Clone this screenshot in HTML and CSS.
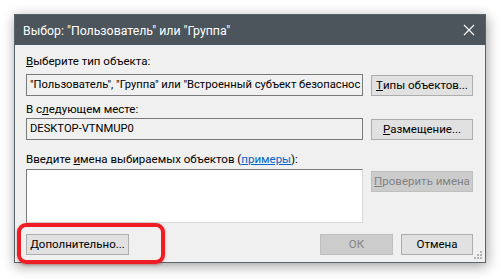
FILE: index.html
```html
<!DOCTYPE html>
<html lang="ru">
<head>
<meta charset="utf-8">
<title>Выбор</title>
<link rel="stylesheet" href="styles.css">
</head>
<body>
<div class="page">
  <div class="window">
    <div class="titlebar">
      <span class="title">Выбор: "Пользователь" или "Группа"</span>
      <svg class="close" width="12" height="12" viewBox="0 0 12 12"><path d="M1 1 L11 11 M11 1 L1 11" stroke="#fff" stroke-width="1.1" fill="none"/></svg>
    </div>
    <div class="content">
      <div class="label l1"><u>В</u>ыберите тип объекта:</div>
      <div class="row">
        <div class="field">"Пользователь", "Группа" или "Встроенный субъект безопаснос</div>
        <div class="btn"><u>Т</u>ипы объектов...</div>
      </div>
      <div class="label l2">В с<u>л</u>едующем месте:</div>
      <div class="row">
        <div class="field">DESKTOP-VTNMUP0</div>
        <div class="btn"><u>Р</u>азмещение...</div>
      </div>
      <div class="label l3">Введите <u>и</u>мена выбираемых объектов (<span class="link">примеры</span>):</div>
      <div class="row top">
        <div class="area"></div>
        <div class="btn disabled btn-check"><u>П</u>роверить имена</div>
      </div>
      <div class="bottom">
        <div class="btn btn-more"><u>Д</u>ополнительно...</div>
        <div class="spacer"></div>
        <div class="btn disabled btn-ok">ОК</div>
        <div class="btn btn-cancel">Отмена</div>
      </div>
    </div>
    <svg class="grip" width="8" height="8" viewBox="0 0 8 8">
      <rect x="6" y="0" width="2" height="2" fill="#b4b4b4"/>
      <rect x="3" y="3" width="2" height="2" fill="#b4b4b4"/>
      <rect x="6" y="3" width="2" height="2" fill="#b4b4b4"/>
      <rect x="0" y="6" width="2" height="2" fill="#b4b4b4"/>
      <rect x="3" y="6" width="2" height="2" fill="#b4b4b4"/>
      <rect x="6" y="6" width="2" height="2" fill="#b4b4b4"/>
    </svg>
  </div>
  <div class="highlight"></div>
</div>
</body>
</html>
```

FILE: styles.css
```css
html, body {
  margin: 0;
  padding: 0;
  background: #ffffff;
}
body {
  font-family: Roboto, "Noto Sans", sans-serif;
  font-size: 11.5px;
  color: #000;
}
.page {
  position: relative;
  width: 501px;
  height: 279px;
  padding: 14px 0 0 14px;
  box-sizing: border-box;
}
.window {
  position: relative;
  width: 472px;
  height: 249px;
  box-sizing: border-box;
  border: 1px solid #5c6469;
  background: #f0f0f0;
  box-shadow: 1px 3px 12px rgba(0,0,0,0.38);
  display: flex;
  flex-direction: column;
}
.titlebar {
  height: 30px;
  background: #4c555b;
  display: flex;
  align-items: center;
  padding: 0 10px 0 8px;
  flex: none;
}
.title {
  color: #fff;
  font-size: 12.3px;
  flex: 1;
  padding-top: 1px;
}
.content {
  padding: 0 12px 0 11px;
  display: flex;
  flex-direction: column;
}
.label {
  line-height: 15px;
  height: 15px;
  white-space: nowrap;
}
.l1 { margin-top: 9px; margin-bottom: 5px; }
.l2 { margin-top: 6px; margin-bottom: 1px; }
.l3 { margin-top: 12px; margin-bottom: 2px; }
.row {
  display: flex;
  align-items: center;
  justify-content: space-between;
}
.row.top { align-items: flex-start; }
.field {
  width: 337px;
  height: 22px;
  box-sizing: border-box;
  border: 1px solid #7a7a7a;
  background: #f0f0f0;
  line-height: 20px;
  padding: 0 3px;
  white-space: nowrap;
  overflow: hidden;
  font-size: 11.2px;
}
.area {
  width: 337px;
  height: 54px;
  box-sizing: border-box;
  border: 1px solid #7a7a7a;
  border-right-color: #d8d8d8;
  border-bottom-color: #d8d8d8;
  background: #fff;
}
.btn {
  width: 102px;
  height: 21px;
  box-sizing: border-box;
  border: 1px solid #adadad;
  background: #e1e1e1;
  display: flex;
  align-items: center;
  justify-content: center;
  white-space: nowrap;
  line-height: 19px;
}
.btn.disabled {
  background: #cccccc;
  border-color: #bfbfbf;
  color: #838383;
}
.btn-check { margin-top: 2px; }
.bottom {
  display: flex;
  margin-top: 11px;
  align-items: center;
}
.spacer { flex: 1; }
.btn-more { width: 103px; }
.btn-ok { width: 73px; margin-right: 8px; color: #a0a0a0; }
.btn-cancel { width: 72px; }
.link {
  color: #0066cc;
  text-decoration: underline;
}
.grip {
  position: absolute;
  right: 3px;
  bottom: 3px;
}
.highlight {
  position: absolute;
  left: 17px;
  top: 223px;
  width: 148px;
  height: 41px;
  box-sizing: border-box;
  border: 4px solid #ee1c24;
  border-radius: 9px;
  box-shadow: 0 1px 3px rgba(120,0,0,0.35);
}
```
